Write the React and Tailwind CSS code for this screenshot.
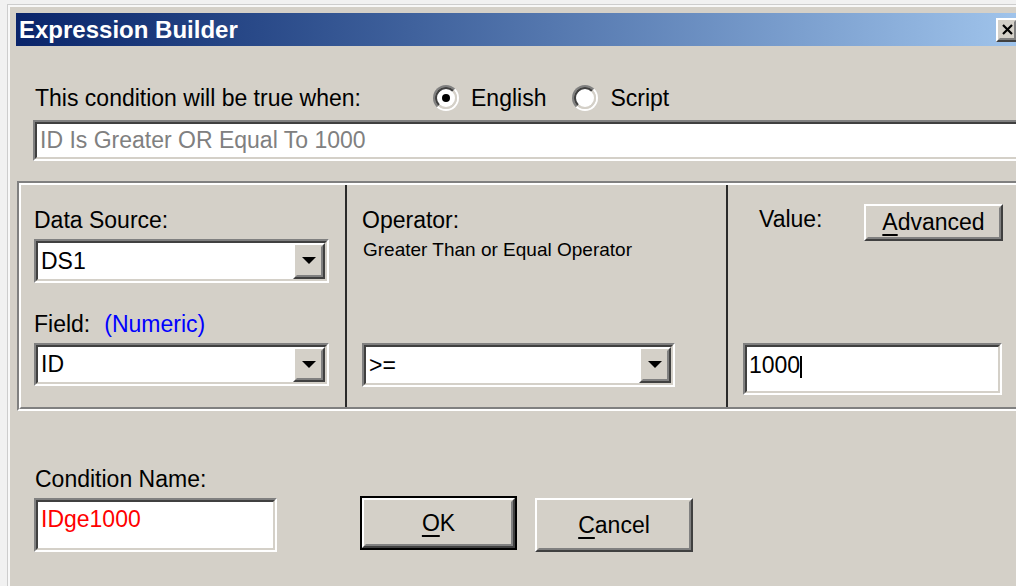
import React from 'react';

// classic 3D bevels
const sunkenOuter = 'border-2 border-t-[#808080] border-l-[#808080] border-r-white border-b-white';
const sunkenInner = 'border-2 border-t-[#404040] border-l-[#404040] border-r-[#d4d0c8] border-b-[#d4d0c8]';
const raisedOuter = 'border-2 border-t-white border-l-white border-r-[#404040] border-b-[#404040]';
const raisedInner = 'border-2 border-t-[#d4d0c8] border-l-[#d4d0c8] border-r-[#808080] border-b-[#808080]';

function TextBox({ className = '', inner = 'items-center', children }) {
  return (
    <div className={`${sunkenOuter} ${className}`}>
      <div className={`flex h-full bg-white ${sunkenInner} ${inner}`}>{children}</div>
    </div>
  );
}

function Combo({ value, className }) {
  return (
    <TextBox className={className}>
      <span className="flex-1 pl-[3px] text-[23px] leading-none">{value}</span>
      <div className={`h-full w-[32px] bg-[#d4d0c8] ${raisedOuter}`}>
        <div className={`flex h-full items-center justify-center ${raisedInner}`}>
          <svg width="14" height="8" viewBox="0 0 14 8">
            <polygon points="0,0 14,0 7,7" fill="#000" />
          </svg>
        </div>
      </div>
    </TextBox>
  );
}

function Button({ children, className = '', isDefault = false }) {
  const body = (
    <div className={`h-full bg-[#d4d0c8] ${raisedOuter}`}>
      <div className={`flex h-full items-center justify-center text-[23px] leading-none ${raisedInner}`}>
        {children}
      </div>
    </div>
  );
  if (isDefault) return <div className={`border-2 border-black ${className}`}>{body}</div>;
  return <div className={className}>{body}</div>;
}

function Radio({ checked }) {
  return (
    <div className="h-[26px] w-[26px] rounded-full border-2 border-t-[#808080] border-l-[#808080] border-r-white border-b-white">
      <div className="flex h-full w-full items-center justify-center rounded-full border-2 border-t-[#404040] border-l-[#404040] border-r-[#d4d0c8] border-b-[#d4d0c8] bg-white">
        {checked && <div className="h-[8px] w-[8px] rounded-full bg-black" />}
      </div>
    </div>
  );
}

function Key({ children }) {
  return <span className="underline decoration-2 underline-offset-[4px]">{children}</span>;
}

export default function App() {
  return (
    <div className="h-[586px] w-[1016px] overflow-hidden bg-[#f1f1f1] pt-[5px] pl-[8px] font-['Liberation_Sans',Arial,sans-serif] text-black">
      <div className="h-[600px] w-[1060px] border-t-2 border-l-2 border-[#f8f8f8] bg-[#d4d0c8] shadow-[-1px_-1px_0_#cdcdcd]">
        {/* title bar */}
        <div className="mt-[6px] ml-[6px] flex h-[33px] w-[1040px] items-center bg-linear-to-r from-[#0a246a] to-[#a6caf0] pl-[3px]">
          <span className="text-[24px] font-bold leading-none text-white">Expression Builder</span>
          <div className={`ml-auto mr-[38px] h-[24px] w-[22px] bg-[#d4d0c8] ${raisedOuter}`}>
            <div className={`flex h-full items-center justify-center ${raisedInner}`}>
              <svg width="11" height="11" viewBox="0 0 11 11" className="shrink-0">
                <path d="M1 1 L10 10 M10 1 L1 10" stroke="#000" strokeWidth="2.2" />
              </svg>
            </div>
          </div>
        </div>

        {/* mode row */}
        <div className="mt-[39px] ml-[25px] flex h-[26px] items-center text-[23px] leading-[26px]">
          <span className="w-[398px]">This condition will be true when:</span>
          <Radio checked />
          <span className="ml-[12px]">English</span>
          <div className="ml-[26px]">
            <Radio />
          </div>
          <span className="ml-[12px]">Script</span>
        </div>

        <TextBox className="mt-[9px] ml-[23px] h-[41px] w-[1040px]">
          <span className="pl-[3px] text-[23px] leading-none text-[#808080]">ID Is Greater OR Equal To 1000</span>
        </TextBox>

        {/* condition group */}
        <div className="mt-[20px] ml-[7px] h-[230px] w-[1040px] border-2 border-t-[#808080] border-l-[#808080] border-r-white border-b-white">
          <div className="flex h-full border-2 border-t-white border-l-white border-r-[#808080] border-b-[#808080] text-[23px] leading-[26px]">
            <div className="w-[324px]">
              <div className="mt-[22px] pl-[13px]">Data Source:</div>
              <Combo value="DS1" className="mt-[6px] ml-[13px] h-[44px] w-[295px]" />
              <div className="mt-[28px] pl-[13px]">
                Field:<span className="ml-[14px] text-[#0000ff]">(Numeric)</span>
              </div>
              <Combo value="ID" className="mt-[6px] ml-[13px] h-[43px] w-[295px]" />
            </div>
            <div className="w-[2px] bg-[#2a2a2a]" />
            <div className="w-[379px]">
              <div className="mt-[22px] pl-[15px]">Operator:</div>
              <div className="mt-[6px] pl-[16px] text-[19px] leading-[22px]">Greater Than or Equal Operator</div>
              <Combo value=">=" className="mt-[82px] ml-[15px] h-[44px] w-[313px]" />
            </div>
            <div className="w-[2px] bg-[#2a2a2a]" />
            <div className="flex-1">
              <div className="mt-[19px] flex items-start">
                <span className="mt-[2px] w-[136px] pl-[31px]">Value:</span>
                <Button className="h-[37px] w-[139px]">
                  <Key>A</Key>dvanced
                </Button>
              </div>
              <TextBox className="mt-[102px] ml-[15px] h-[52px] w-[259px]" inner="items-start pt-[5px]">
                <span className="pl-[2px] leading-[26px]">1000</span>
                <span className="mt-[4px] h-[22px] w-[2px] bg-black" />
              </TextBox>
            </div>
          </div>
        </div>

        {/* name + actions */}
        <div className="mt-[55px] ml-[25px] text-[23px] leading-[26px]">Condition Name:</div>
        <div className="mt-[4px] flex items-start">
          <TextBox className="mt-[2px] ml-[24px] h-[54px] w-[243px]" inner="items-start pt-[4px]">
            <span className="pl-[3px] text-[23px] leading-[26px] text-[#ff0000]">IDge1000</span>
          </TextBox>
          <Button isDefault className="ml-[83px] h-[54px] w-[157px]">
            <Key>O</Key>K
          </Button>
          <Button className="mt-[2px] ml-[18px] h-[54px] w-[158px]">
            <Key>C</Key>ancel
          </Button>
        </div>
      </div>
    </div>
  );
}
